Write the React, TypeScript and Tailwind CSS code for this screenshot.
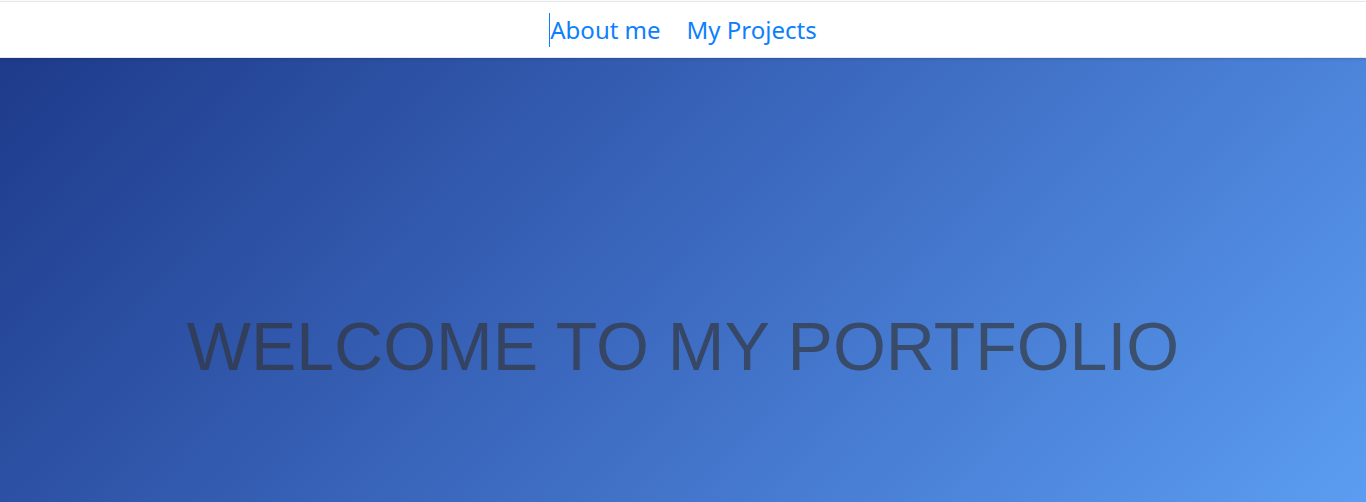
export default function App() {
  return (
    <div className="flex min-h-screen flex-col bg-white pt-px">
      <nav aria-label="Main" className="relative flex h-[57px] items-center justify-center gap-[26px] border-y border-gray-200 font-['Noto_Sans',sans-serif] text-[24px] leading-[34px] text-[#0d7ffd] shadow-sm">
        <a href="#about" className="border-l border-[#0d7ffd]">About me</a>
        <a href="#projects">My Projects</a>
      </nav>
      <main className="flex grow justify-center bg-linear-[134deg,#1e3a8a_0%,#3c6ac0_50%,#5b9df2_100%] pt-[248px]">
        <h1 className="whitespace-nowrap font-['Liberation_Sans',Arial,sans-serif] text-[68px] leading-[80px] text-[#333]/65">WELCOME TO MY PORTFOLIO</h1>
      </main>
    </div>
  );
}
